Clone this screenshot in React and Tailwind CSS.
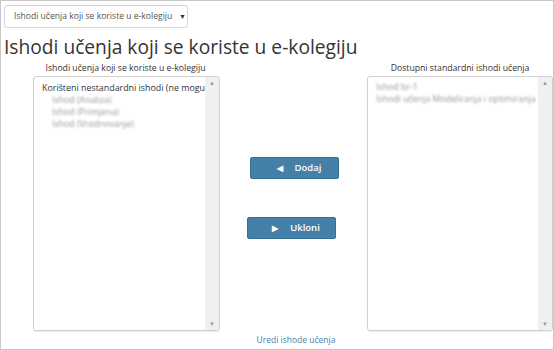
export default function App() {
  const font = { fontFamily: '"Open Sans", "Noto Sans", sans-serif' }
  return (
    <div style={font} className="w-[554px] h-[350px] border border-[#c8c8c8] bg-white overflow-hidden text-[#333]">
      <div className="pt-[4px] pl-[3px]">
        <div className="relative w-[184px] h-[23px] border border-[#d4d4d4] rounded-[3px] flex items-center pl-[9px] text-[8.6px] text-[#555] whitespace-nowrap">
          Ishodi učenja koji se koriste u e-kolegiju
          <span className="absolute right-[1px] top-[6px] text-[7px] text-[#333]">▼</span>
        </div>
      </div>
      <h2 className="pl-[3px] mt-[6px] text-[19.2px] leading-[26px] text-[#333] whitespace-nowrap">Ishodi učenja koji se koriste u e-kolegiju</h2>
      <div className="flex mt-[2px]">
        <div className="ml-[32px] w-[187px] flex flex-col">
          <div className="text-[8.7px] text-center leading-[13px] mb-[1px] pr-[2px] whitespace-nowrap">Ishodi učenja koji se koriste u e-kolegiju</div>
          <ListBox>
            <div className="text-[8.9px] text-[#333] whitespace-nowrap overflow-hidden">Korišteni nestandardni ishodi (ne mogu se ukloniti)</div>
            <div className="pl-[10px] text-[8.8px] text-[#999] blur-[1.2px] leading-[12px]">
              <div>Ishod (Analiza)</div>
              <div>Ishod (Primjena)</div>
              <div>Ishod (Vrednovanje)</div>
            </div>
          </ListBox>
        </div>
        <div className="w-[148px] flex flex-col items-center pt-[95px]">
          <button className="ml-[1px] w-[89px] h-[22px] rounded-[2px] bg-[#4580a8] border border-[#3a6f94] text-white text-[9.5px] font-semibold flex items-center justify-center gap-[12px] pl-[10px]">
            <span className="text-[8px]">◀</span>Dodaj
          </button>
          <button className="mt-[38px] -ml-[5px] w-[89px] h-[22px] rounded-[2px] bg-[#4580a8] border border-[#3a6f94] text-white text-[9.5px] font-semibold flex items-center justify-center gap-[12px] pl-[10px]">
            <span className="text-[8px]">▶</span>Ukloni
          </button>
        </div>
        <div className="w-[186px] flex flex-col">
          <div className="text-[8.7px] text-center leading-[13px] mb-[1px] whitespace-nowrap">Dostupni standardni ishodi učenja</div>
          <ListBox>
            <div className="text-[8.8px] text-[#999] blur-[1.2px] leading-[12px] whitespace-nowrap overflow-hidden">
              <div>Ishod br-1</div>
              <div>Ishodi učenja Modeliranja i optimiranja u</div>
            </div>
          </ListBox>
        </div>
      </div>
      <div className="text-center text-[8.5px] text-[#4f7fa8] mt-[3px] pl-[38px]">Uredi ishode učenja</div>
    </div>
  )
}

function ListBox({ children }) {
  return (
    <div className="relative h-[255px] border border-[#d0d0d0] rounded-[3px] shadow-[0_1px_1px_rgba(0,0,0,0.08)] flex overflow-hidden">
      <div className="flex-1 min-w-0 pl-[8px] pt-[4px] leading-[13px] overflow-hidden">{children}</div>
      <div className="w-[14px] bg-[#f0f0f0] flex flex-col justify-between items-center py-[3px]">
        <span className="text-[6px] text-[#999] leading-none">▲</span>
        <span className="text-[6px] text-[#999] leading-none">▼</span>
      </div>
    </div>
  )
}
